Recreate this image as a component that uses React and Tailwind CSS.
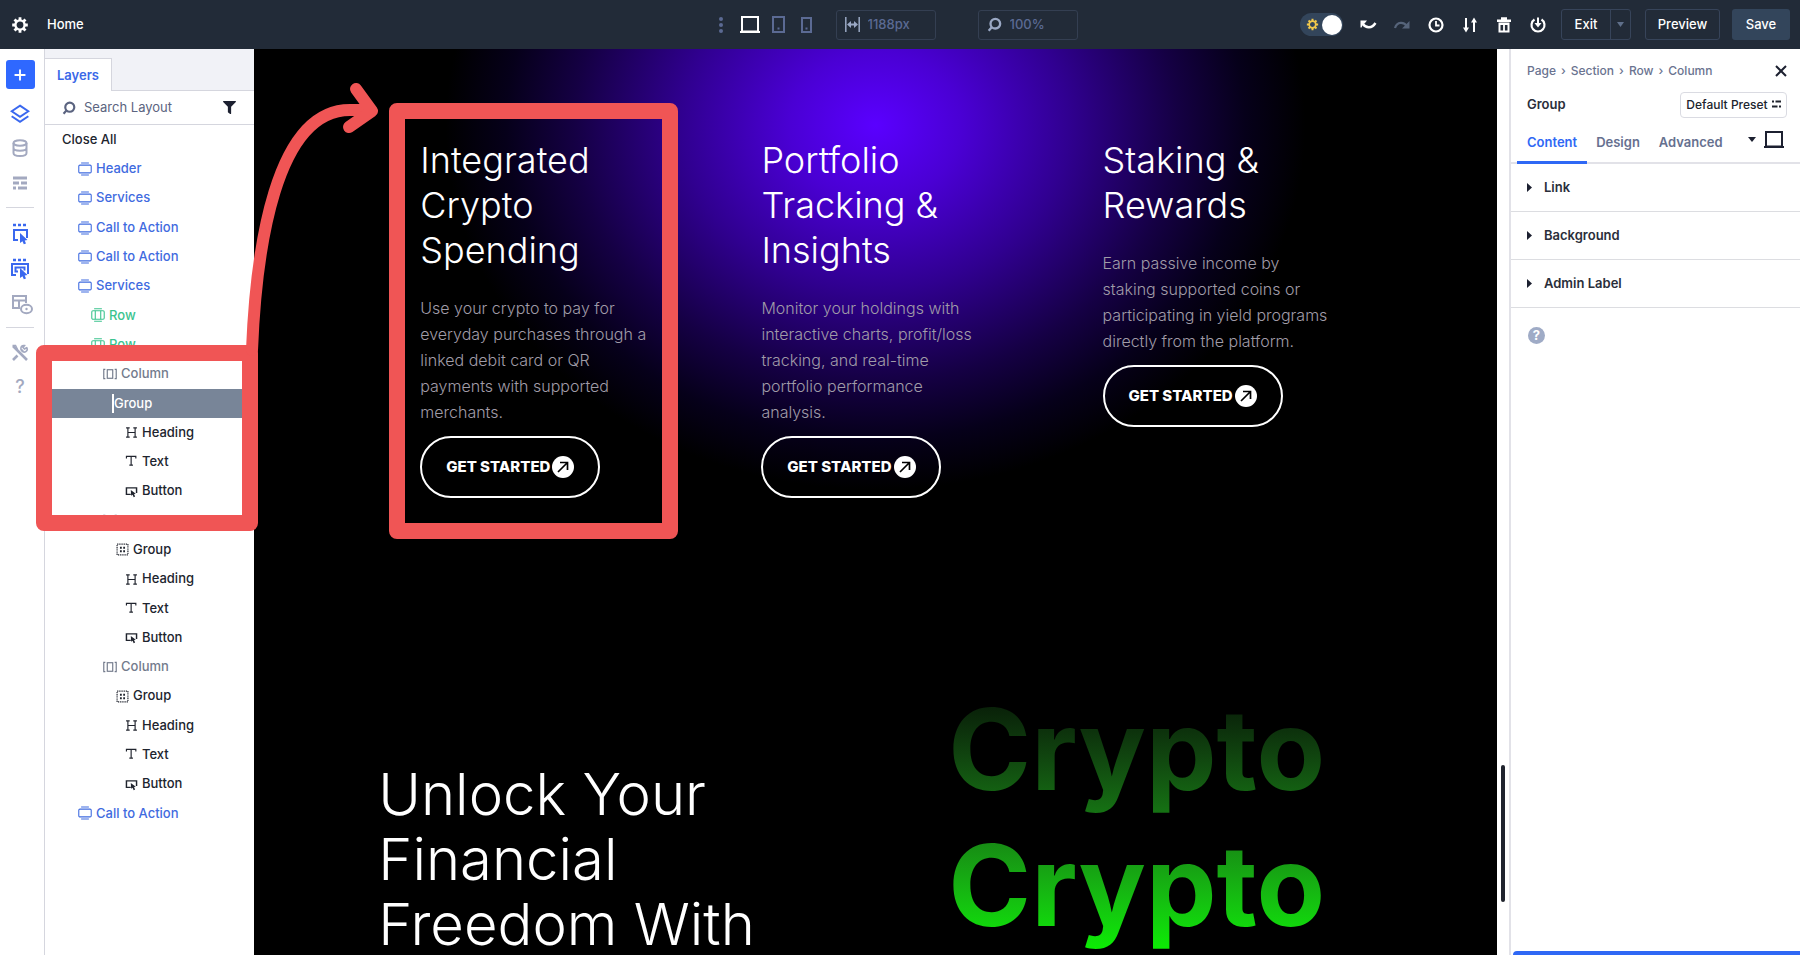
import React from 'react';
import { FaFilter } from 'react-icons/fa';

const layers = [
    { type: 'section', label: 'Header' },
    { type: 'section', label: 'Services' },
    { type: 'section', label: 'Call to Action' },
    { type: 'section', label: 'Call to Action' },
    { type: 'section', label: 'Services' },
    { type: 'row', label: 'Row' },
    { type: 'row', label: 'Row' },
    { type: 'column', label: 'Column' },
    { type: 'group', label: 'Group', selected: true },
    { type: 'heading', label: 'Heading' },
    { type: 'text', label: 'Text' },
    { type: 'button', label: 'Button' },
    { type: 'column', label: 'Column' },
    { type: 'group', label: 'Group' },
    { type: 'heading', label: 'Heading' },
    { type: 'text', label: 'Text' },
    { type: 'button', label: 'Button' },
    { type: 'column', label: 'Column' },
    { type: 'group', label: 'Group' },
    { type: 'heading', label: 'Heading' },
    { type: 'text', label: 'Text' },
    { type: 'button', label: 'Button' },
    { type: 'section', label: 'Call to Action' },
];

const layerStyles = {
    section: 'pl-[33px] text-[#3f6be0]',
    row: 'pl-[46px] text-[#3cc48f]',
    column: 'pl-[58px] text-[#737b8c]',
    group: 'pl-[71px] text-[#20242e]',
    heading: 'pl-[80px] text-[#20242e]',
    text: 'pl-[80px] text-[#20242e]',
    button: 'pl-[80px] text-[#20242e]',
};

const services = [
    {
        title: 'Integrated\nCrypto\nSpending',
        text: 'Use your crypto to pay for\neveryday purchases through a\nlinked debit card or QR\npayments with supported\nmerchants.',
    },
    {
        title: 'Portfolio\nTracking &\nInsights',
        text: 'Monitor your holdings with\ninteractive charts, profit/loss\ntracking, and real-time\nportfolio performance\nanalysis.',
    },
    {
        title: 'Staking &\nRewards',
        text: 'Earn passive income by\nstaking supported coins or\nparticipating in yield programs\ndirectly from the platform.',
    },
];

const Svg = ({ size = 18, children, className = '', sw = 2 }) => (
    <svg width={size} height={size} viewBox="0 0 18 18" fill="none" stroke="currentColor" strokeWidth={sw} className={`shrink-0 ${className}`} aria-hidden="true">
        {children}
    </svg>
);

const GearIcon = ({ size, className }) => (
    <Svg size={size} className={className}>
        <circle cx="9" cy="9" r="4.6" strokeWidth="2.4" />
        <path d="M9 1.2v3M9 13.8v3M1.2 9h3M13.8 9h3M3.5 3.5l2.1 2.1M12.4 12.4l2.1 2.1M3.5 14.5l2.1-2.1M12.4 5.6l2.1-2.1" strokeWidth="2.8" />
    </Svg>
);

const SearchIcon = ({ size = 14, className }) => (
    <Svg size={size} className={className} sw={2.8}>
        <circle cx="10" cy="8" r="5.8" />
        <path d="M6 12l-4 4.4" />
    </Svg>
);

const LaptopIcon = ({ className }) => (
    <svg width="20" height="17" viewBox="0 0 20 17" fill="none" stroke="currentColor" strokeWidth="2" className={className} aria-hidden="true">
        <path d="M2 1h16v14.5H2zM0 16h20" />
    </svg>
);

const SelectIcon = ({ double }) => (
    <svg width="20" height="24" viewBox="0 0 20 24" fill="none" stroke="currentColor" strokeWidth="2" aria-hidden="true">
        <path d="M3 3h3M8 3h3M13 3h3" strokeWidth="2.6" />
        <path d={double ? 'M6 18H2V7h16v10' : 'M8 18H4V8h13v8'} />
        {double && <path d="M8 14.500H5.500V10.500h9v3" />}
        <path d="M10 11l7.500 7-2.800.4 1.300 3-2.200.9-1.300-3-2.500 1.700z" fill="currentColor" stroke="none" />
    </svg>
);

const LayerIcon = ({ type }) => {
    if (type === 'section') {
        return (
            <Svg size={14} sw={1.4}>
                <rect x="1" y="4" width="16" height="10" rx="1.5" />
                <path d="M4 1.2h10M4 16.8h10" />
            </Svg>
        );
    }
    if (type === 'row') {
        return (
            <Svg size={14} sw={1.4}>
                <rect x="1" y="3.5" width="16" height="11" rx="1.5" />
                <path d="M4 1h10M4 17h10M5.500 3.500v11M12.500 3.500v11" />
            </Svg>
        );
    }
    if (type === 'column') {
        return (
            <Svg size={14} sw={1.5}>
                <rect x="5.5" y="3.5" width="7" height="11" />
                <path d="M3 3H1v12h2M15 3h2v12h-2" />
            </Svg>
        );
    }
    if (type === 'group') {
        return (
            <Svg size={13} sw={1.6}>
                <rect x="1.5" y="1.5" width="15" height="15" strokeDasharray="1.8 1.2" />
                <path d="M5.500 6.500h2.500M10 6.500h2.500M5.500 11.500h2.500M10 11.500h2.500" strokeWidth="2.6" />
            </Svg>
        );
    }
    if (type === 'heading') {
        return (
            <Svg size={13} sw={1.6}>
                <path d="M4 2.500v13M14 2.500v13M4 9h10M1.500 2.500h5M11.500 2.500h5M1.500 15.500h5M11.500 15.500h5" />
            </Svg>
        );
    }
    if (type === 'text') {
        return (
            <Svg size={13} sw={1.6}>
                <path d="M2 5V2h13v3M8.500 2v12M6 14h5" />
            </Svg>
        );
    }
    return (
        <Svg size={13} sw={2}>
            <path d="M8 13H2V4h14v7" />
            <path d="M8 7l7 5-2.500.5 1.500 3.500-2 .8-1.500-3.300-2 1.500z" fill="currentColor" stroke="none" />
        </Svg>
    );
};

const TopBar = () => (
    <header className="flex h-[49px] shrink-0 items-center bg-[#222b38] text-[13px] font-medium text-white">
        <div className="flex flex-1 items-center gap-[18px] pl-[11px]">
            <button aria-label="Settings"><GearIcon size={18} /></button>
            <span>Home</span>
        </div>
        <div className="flex items-center gap-3 pr-[6px] text-[#5b6a93]">
            <button aria-label="More" className="mr-1">
                <svg width="6" height="18" viewBox="0 0 6 18" fill="currentColor"><circle cx="3" cy="3" r="2" /><circle cx="3" cy="9" r="2" /><circle cx="3" cy="15" r="2" /></svg>
            </button>
            <button aria-label="Desktop" className="text-white"><LaptopIcon /></button>
            <button aria-label="Tablet">
                <svg width="13" height="17" viewBox="0 0 13 17" fill="none" stroke="currentColor" strokeWidth="2"><path d="M1 1h11v15H1zM5.500 12.500h2" /></svg>
            </button>
            <button aria-label="Phone" className="mx-1">
                <svg width="11" height="16" viewBox="0 0 11 16" fill="none" stroke="currentColor" strokeWidth="2"><path d="M1 1h9v14H1zM4.500 11.500h2" /></svg>
            </button>
            <label className="ml-2 flex h-[30px] w-[100px] items-center gap-2 rounded-[3px] border border-[#343f52] pl-2">
                <svg width="15" height="15" viewBox="0 0 15 15" fill="none" stroke="#9aa8c4" strokeWidth="1.5"><path d="M.8 0v15M14.200 0v15" /><path d="M2 7.500l4-3.500v2.500h3V4l4 3.500L9 11V8.500H6V11z" fill="#9aa8c4" stroke="none" /></svg>
                <input aria-label="Width" defaultValue="1188px" className="w-14 bg-transparent outline-none" />
            </label>
            <label className="ml-[30px] flex h-[30px] w-[100px] items-center gap-2 rounded-[3px] border border-[#343f52] pl-2">
                <SearchIcon size={15} className="text-[#9aa8c4]" />
                <input aria-label="Zoom" defaultValue="100%" className="w-14 bg-transparent outline-none" />
            </label>
        </div>
        <div className="flex flex-1 items-center justify-end gap-[14px] pr-[10px]">
            <div className="flex items-center gap-4">
                <button aria-label="Color mode" className="flex h-[23px] w-[43px] items-center justify-between rounded-full bg-[#33455b] pr-px pl-[6px]">
                    <GearIcon size={13} className="text-[#f2c94c]" />
                    <span className="h-5 w-5 rounded-full bg-white" />
                </button>
                <button aria-label="Undo">
                    <Svg><path d="M4 8c3 4.500 9 4.500 12.500-1" strokeWidth="2.4" /><path d="M1.500 4.500h6.500L6 7l-2 1.500L2.500 11.500h-1z" fill="currentColor" stroke="none" /></Svg>
                </button>
                <button aria-label="Redo" className="text-[#56647a]">
                    <Svg><path d="M2 12c2-6.500 9-6.500 12-1.500" strokeWidth="2.2" /><path d="M16.500 5v7.500h-7.500z" fill="currentColor" stroke="none" /></Svg>
                </button>
                <button aria-label="History">
                    <Svg><circle cx="9" cy="9" r="6.5" strokeWidth="2.2" /><path d="M9 5v4.500h3.500" strokeWidth="1.8" /></Svg>
                </button>
                <button aria-label="Portability">
                    <Svg><path d="M5 2v12M13 16V5" /><path d="M2 11.500h6L5 16.500zM10 6.500h6L13 1.500z" fill="currentColor" stroke="none" /></Svg>
                </button>
                <button aria-label="Clear">
                    <Svg><path d="M2 4.800h14M6 2.500h6" strokeWidth="2.4" /><path d="M4.500 7.500v8h9v-8z" /><path d="M9 8v7M4 8.200h10" strokeWidth="1.8" /></Svg>
                </button>
                <button aria-label="Save state">
                    <Svg><path d="M5.500 3.500a6.500 6.500 0 1 0 7 0" strokeWidth="2.2" /><path d="M9 1.500v7" /><path d="M5.500 7h7L9 11.500z" fill="currentColor" stroke="none" /></Svg>
                </button>
            </div>
            <div className="flex h-[31px] w-[70px] rounded-[3px] border border-[#37445a]">
                <button className="flex-1">Exit</button>
                <button aria-label="Exit options" className="flex w-5 items-center justify-center border-l border-[#37445a] text-[#5f6f8a]">
                    <svg width="7" height="5" viewBox="0 0 7 5" fill="currentColor"><path d="M0 0h7L3.500 5z" /></svg>
                </button>
            </div>
            <div className="flex gap-3">
                <button className="h-[31px] w-[75px] rounded-[3px] border border-[#37445a]">Preview</button>
                <button className="h-[31px] w-[58px] rounded-[3px] bg-[#33455b]">Save</button>
            </div>
        </div>
    </header>
);

const Rail = () => (
    <nav className="flex w-[45px] shrink-0 flex-col items-center border-r border-[#d5d6de] pt-[11px] pr-1 text-[#a3a9c0]">
        <button aria-label="Add" className="flex h-[29px] w-[29px] items-center justify-center rounded-[3px] bg-[#2f68ff] text-white">
            <Svg size={14}><path d="M9 2v14M2 9h14" strokeWidth="2.4" /></Svg>
        </button>
        <button aria-label="Layers" className="mt-[15px] text-[#3a68ef]">
            <Svg size={20} sw={1.8}><path d="M9 1.500l7.500 5L9 11.500l-7.500-5zM1.500 11L9 16l7.500-5" /></Svg>
        </button>
        <button aria-label="Database" className="mt-[15px]">
            <Svg><ellipse cx="9" cy="4" rx="6.5" ry="2.8" /><path d="M2.500 4v10c0 4 13 4 13 0V4M2.500 9c0 3.500 13 3.500 13 0" /></Svg>
        </button>
        <button aria-label="Wireframe" className="mt-[17px]">
            <Svg sw={3}><path d="M2 4h14M2 9h6M10 9h6M2 14h3M7 14h9" /></Svg>
        </button>
        <hr className="mt-[15px] w-7 border-[#d5d6de]" />
        <button aria-label="Click mode" className="mt-[14px] text-[#3a68ef]"><SelectIcon /></button>
        <button aria-label="Multi select" className="mt-[11px] text-[#3a68ef]"><SelectIcon double /></button>
        <button aria-label="Visibility" className="mt-[13px] ml-1">
            <svg width="22" height="21" viewBox="0 0 22 21" fill="none" stroke="currentColor" strokeWidth="2"><path d="M9 14H2V2h13v7M2 6.500h13M8 6.500V14" /><ellipse cx="15.5" cy="15" rx="5.5" ry="4.3" /><circle cx="15.5" cy="15" r="1.2" fill="currentColor" stroke="none" /></svg>
        </button>
        <hr className="mt-3 w-7 border-[#d5d6de]" />
        <button aria-label="Tools" className="mt-4">
            <Svg><path d="M5.500 5.500L16 16M2 2l3.500 3.500M6.500 11.500L2 16M12 6l-1.500 1.500" strokeWidth="2.6" /><path d="M16 3.500L13.500 5 12 3.500 13.500 1.500c-3-.5-4 2-3.500 4l2.500 2.500c2.500.5 4.500-1.500 3.500-4.500M1.500 1.500h3l2 4" strokeWidth="1.6" /></Svg>
        </button>
        <button aria-label="Help" className="mt-4 text-[18px] leading-[18px] font-medium">?</button>
    </nav>
);

const LayersPanel = () => (
    <aside className="flex w-[209px] shrink-0 flex-col">
        <div className="flex h-[42px] items-end border-b border-[#d5d6de] bg-[#f1f2f7]">
            <button className="-mb-px h-[33px] w-[67px] border-t border-r border-[#d5d6de] bg-white pt-px text-[13px] font-semibold text-[#3a68e8]">Layers</button>
        </div>
        <div className="flex h-[34px] shrink-0 items-center border-b border-[#d5d6de] pr-[18px] pl-[17px]">
            <SearchIcon className="text-[#5b6480]" />
            <input aria-label="Search Layout" placeholder="Search Layout" className="ml-2 min-w-0 flex-1 text-[13px] outline-none placeholder:text-[#5b6480]" />
            <button aria-label="Filter"><FaFilter size={13} color="#1c2030" /></button>
        </div>
        <ul className="grid h-[703px] auto-rows-fr text-[13px] font-medium">
            <li className="flex items-center pl-[17px] text-[#20242e]"><button>Close All</button></li>
            {layers.map((layer, i) => (
                <li key={i} className={`flex items-center gap-1 ${layerStyles[layer.type]} ${layer.selected ? 'bg-[#788598]' : ''}`}>
                    {layer.selected ? (
                        <input aria-label="Layer name" defaultValue={layer.label} className="-ml-1 w-24 border-l-2 border-white bg-transparent text-white outline-none" />
                    ) : (
                        <>
                            <LayerIcon type={layer.type} />
                            <span>{layer.label}</span>
                        </>
                    )}
                </li>
            ))}
        </ul>
    </aside>
);

const Service = ({ title, text }) => (
    <article className="pt-[89px] pl-[42px]">
        <h3 className="text-[36px] leading-[45px] font-light whitespace-pre text-white">{title}</h3>
        <p className="mt-[22px] text-[16px] leading-[26px] font-light whitespace-pre text-[#a09ca8]">{text}</p>
        <a href="#start" className="mt-[11px] inline-flex h-[62px] w-[180px] items-center justify-center gap-[2px] rounded-full border-2 border-white text-[15px] font-extrabold whitespace-nowrap text-white">
            GET STARTED
            <svg width="22" height="22" viewBox="0 0 22 22" aria-hidden="true"><circle cx="11" cy="11" r="11" fill="#fff" /><path d="M6 16l9-9M8 6.500h7.500V14" stroke="#000" strokeWidth="1.7" fill="none" /></svg>
        </a>
    </article>
);

const Canvas = () => (
    <main className="min-w-0 flex-1 overflow-hidden bg-black">
        <section className="h-[632px] bg-[radial-gradient(ellipse_430px_365px_at_50%_76px,#5a00ff_0%,#4a00d4_20%,#300090_45%,#150044_70%,#06001a_86%,#000_100%)]">
            <div className="mx-auto grid w-4/5 grid-cols-3 gap-[29px]">
                {services.map((service) => (
                    <Service key={service.title} {...service} />
                ))}
            </div>
        </section>
        <section className="mx-auto grid w-4/5 grid-cols-[570px_1fr]">
            <h2 className="pt-[81px] text-[58px] leading-[65px] font-light whitespace-pre text-white">{'Unlock Your\nFinancial\nFreedom With'}</h2>
            <p className="w-fit bg-linear-to-b from-[#051005] to-[#08f400] bg-clip-text text-[112px] leading-[136px] font-bold text-transparent">Crypto<br />Crypto</p>
        </section>
    </main>
);

const PanelTitle = ({ children }) => (
    <button className="flex h-12 w-full items-center gap-3 border-b border-[#dcdde1] pl-4 text-[13px] font-semibold text-[#2a2e3a]">
        <svg width="5" height="9" viewBox="0 0 5 9" fill="#1c2030" aria-hidden="true"><path d="M0 0l5 4.500L0 9z" /></svg>
        {children}
    </button>
);

const SettingsPanel = () => (
    <aside className="flex w-[291px] shrink-0 flex-col border-l-2 border-[#e2e2e8] bg-white">
        <div className="flex h-[43px] items-center justify-between pr-[13px] pl-4">
            <nav aria-label="Breadcrumb" className="flex items-center gap-[5px] text-[12px] font-medium text-[#6a7390]">
                <a href="#page">Page</a><span>›</span>
                <a href="#section">Section</a><span>›</span>
                <a href="#row">Row</a><span>›</span>
                <a href="#column">Column</a>
            </nav>
            <button aria-label="Close">
                <svg width="12" height="12" viewBox="0 0 12 12" stroke="#1c2030" strokeWidth="2"><path d="M1 1l10 10M11 1L1 11" /></svg>
            </button>
        </div>
        <div className="flex h-[25px] items-center justify-between pr-[13px] pl-4">
            <h2 className="text-[13px] font-semibold text-[#2a2e3a]">Group</h2>
            <button className="flex h-[26px] w-[107px] items-center justify-center gap-1 rounded-[4px] border border-[#dadbe2] text-[12px] font-medium whitespace-nowrap text-[#20242e]">
                Default Preset
                <svg width="9" height="9" viewBox="0 0 9 9" stroke="currentColor" strokeWidth="2" aria-hidden="true"><path d="M0 1.500h2M3.500 1.500H9M0 6.500h5.500M7 6.500h2" /></svg>
            </button>
        </div>
        <div className="flex h-[47px] items-end justify-between border-b-2 border-[#e2e2e8] pr-4 pl-[6px]">
            <div className="-mb-[2px] flex h-10 text-[13px] font-semibold text-[#66708f]">
                <button className="border-b-[3px] border-[#2f68f5] px-[10px] text-[#2f68f5]">Content</button>
                <button className="border-b-[3px] border-transparent px-[9px]">Design</button>
                <button className="border-b-[3px] border-transparent px-[10px]">Advanced</button>
            </div>
            <button aria-label="Device" className="flex items-center gap-2 self-center text-[#1c2030]">
                <svg width="8" height="5" viewBox="0 0 8 5" fill="currentColor"><path d="M0 0h8L4 5z" /></svg>
                <LaptopIcon />
            </button>
        </div>
        <PanelTitle>Link</PanelTitle>
        <PanelTitle>Background</PanelTitle>
        <PanelTitle>Admin Label</PanelTitle>
        <button aria-label="Help" className="mt-[19px] ml-[17px] flex h-[17px] w-[17px] items-center justify-center rounded-full bg-[#9fabc6] text-[13px] font-bold text-white">?</button>
        <div className="mt-auto ml-[2px] h-1 rounded-tl bg-[#2f68f5]" />
    </aside>
);

const Annotations = () => (
    <div className="pointer-events-none">
        <div className="absolute top-[345px] left-[36px] h-[186px] w-[222px] rounded-lg border-[16px] border-[#f05555]" />
        <div className="absolute top-[103px] left-[389px] h-[436px] w-[289px] rounded-lg border-[16px] border-[#f05555]" />
        <svg width="400" height="360" viewBox="0 0 400 360" className="absolute top-0 left-0" fill="none" stroke="#f05555" strokeWidth="12" strokeLinecap="round" strokeLinejoin="round" aria-hidden="true">
            <path d="M252 350C256 250 275 110 350 110h20" />
            <path d="M356 89l16 22-23 16" />
        </svg>
    </div>
);

export default function App() {
    return (
        <div className="relative flex h-screen flex-col overflow-hidden bg-white font-['Inter',sans-serif]">
            <TopBar />
            <div className="flex min-h-0 flex-1">
                <Rail />
                <LayersPanel />
                <Canvas />
                <div className="flex w-3 shrink-0 items-end justify-center pb-[53px]">
                    <div className="h-[137px] w-1 rounded-full bg-[#20242e]" />
                </div>
                <SettingsPanel />
            </div>
            <Annotations />
        </div>
    );
}
